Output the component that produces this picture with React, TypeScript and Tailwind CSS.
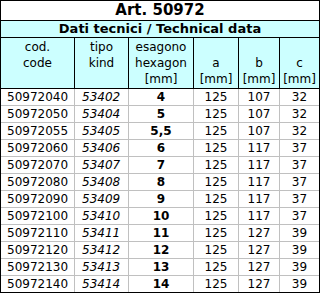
import React from 'react'

type Row = {
  code: string
  kind: string
  hex: string
  a: string
  b: string
  c: string
}

const rows: Row[] = [
  { code: '50972040', kind: '53402', hex: '4', a: '125', b: '107', c: '32' },
  { code: '50972050', kind: '53404', hex: '5', a: '125', b: '107', c: '32' },
  { code: '50972055', kind: '53405', hex: '5,5', a: '125', b: '107', c: '32' },
  { code: '50972060', kind: '53406', hex: '6', a: '125', b: '117', c: '37' },
  { code: '50972070', kind: '53407', hex: '7', a: '125', b: '117', c: '37' },
  { code: '50972080', kind: '53408', hex: '8', a: '125', b: '117', c: '37' },
  { code: '50972090', kind: '53409', hex: '9', a: '125', b: '117', c: '37' },
  { code: '50972100', kind: '53410', hex: '10', a: '125', b: '117', c: '37' },
  { code: '50972110', kind: '53411', hex: '11', a: '125', b: '127', c: '39' },
  { code: '50972120', kind: '53412', hex: '12', a: '125', b: '127', c: '39' },
  { code: '50972130', kind: '53413', hex: '13', a: '125', b: '127', c: '39' },
  { code: '50972140', kind: '53414', hex: '14', a: '125', b: '127', c: '39' },
]

// widths include the right border of each cell
const headers = [
  { w: 'w-[74px]', lines: ['cod.', 'code', ''] },
  { w: 'w-[54px]', lines: ['tipo', 'kind', ''] },
  { w: 'w-[65px]', lines: ['esagono', 'hexagon', '[mm]'] },
  { w: 'w-[45px]', lines: ['', 'a', '[mm]'] },
  { w: 'w-[41px]', lines: ['', 'b', '[mm]'] },
  { w: 'w-[39px]', lines: ['', 'c', '[mm]'] },
]

const App = () => {
  return (
    <div className="w-[321px] h-[293px] bg-white font-['DejaVu_Sans',sans-serif] text-black">
      <div className="w-[320px] border border-black">
        <div className="h-[20px] border-b border-black text-center text-[15px] font-bold leading-[19px]">
          Art. 50972
        </div>
        <div className="h-[17px] border-b border-black bg-[#ccffff] text-center text-[13px] font-bold leading-[16px]">
          Dati tecnici / Technical data
        </div>
        <div className="flex h-[51px] border-b border-black bg-[#ccffff]">
          {headers.map((h, i) => (
            <div
              key={i}
              className={`${h.w} flex flex-col justify-center text-center text-[12px] leading-4 ${i < headers.length - 1 ? 'border-r border-black' : ''}`}
            >
              {h.lines.map((l, j) => (
                <div key={j} className="h-4">{l}</div>
              ))}
            </div>
          ))}
        </div>
        {rows.map((r, i) => (
          <div
            key={r.code}
            className={`flex text-[12px] leading-4 ${i < rows.length - 1 ? 'h-[17px] border-b border-[#c0c0c0]' : 'h-4'}`}
          >
            <div className="w-[74px] border-r border-[#c0c0c0] pl-[6px]">{r.code}</div>
            <div className="w-[54px] border-r border-[#c0c0c0] pl-[7px] italic">{r.kind}</div>
            <div className="w-[65px] border-r border-[#c0c0c0] text-center font-bold">{r.hex}</div>
            <div className="w-[45px] border-r border-[#c0c0c0] text-center">{r.a}</div>
            <div className="w-[41px] border-r border-[#c0c0c0] text-center">{r.b}</div>
            <div className="w-[39px] text-center">{r.c}</div>
          </div>
        ))}
      </div>
    </div>
  )
}

export default App
